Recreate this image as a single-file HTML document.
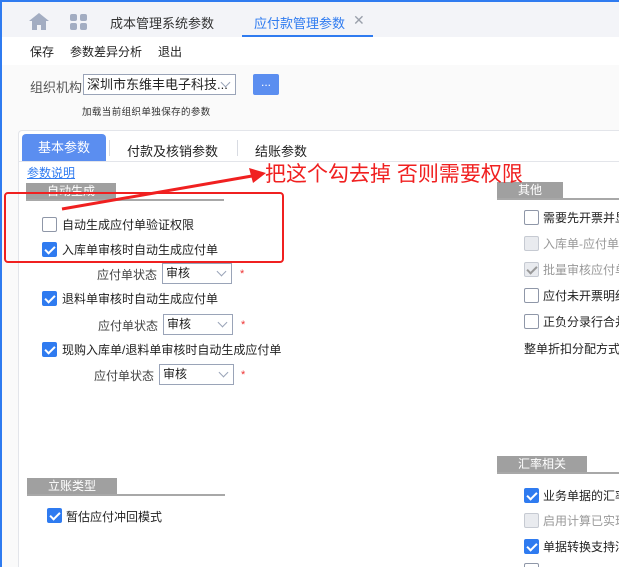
<!DOCTYPE html>
<html style="overflow:hidden;width:619px;height:567px"><head><meta charset="utf-8"><style>
*{margin:0;padding:0;box-sizing:border-box}
body{width:619px;height:567px;overflow:hidden;background:#fff;font-family:"Liberation Sans","Noto Sans CJK SC",sans-serif;font-size:12px;color:#222;position:relative}
.a{position:absolute;white-space:nowrap}
.cb{position:absolute;width:15px;height:15px;border:1px solid #8f97a8;border-radius:2px;background:#fff}
.cb.on{background:#2f7bf0;border-color:#2f7bf0}
.cb.on::after{content:"";position:absolute;left:4px;top:1px;width:4px;height:8px;border:solid #fff;border-width:0 2px 2px 0;transform:rotate(45deg)}
.cb.dis{background:#e9ebef;border-color:#c6cad2}
.cb.disc::after{content:"";position:absolute;left:4px;top:1px;width:4px;height:8px;border:solid #999;border-width:0 2px 2px 0;transform:rotate(45deg)}
.hd{position:absolute;background:#a0a0a0;color:#fff;font-size:12px;height:17px;line-height:17px;text-align:center}
.ln{position:absolute;height:2px;background:#a8a8a8}
.sel{position:absolute;border:1px solid #9aa4b8;background:#fff;height:21px;line-height:19px;padding-left:3px;font-size:12px}
.sel::after{content:"";position:absolute;right:6px;top:4px;width:6px;height:6px;border:solid #9aa4b8;border-width:0 1px 1px 0;transform:rotate(45deg)}
.st{position:absolute;color:#e33;font-size:11px}
.dim{color:#999}
</style></head><body>
<div class="a" style="left:0;top:0;width:619px;height:37px;background:#f3f4f8"></div>
<div class="a" style="left:0;top:0;width:619px;height:2px;background:#2f7bf0"></div>
<div class="a" style="left:0;top:0;width:2px;height:567px;background:#2f7bf0"></div>
<div class="a" style="left:2px;top:65px;width:617px;height:502px;background:#fafafa"></div>
<svg class="a" style="left:29px;top:13px" width="20" height="17" viewBox="0 0 20 17"><path d="M10 0L0 8h3v9h5v-5h4v5h5V8h3z" fill="#a3adc2"/></svg>
<svg class="a" style="left:70px;top:14px" width="17" height="16"><rect x="0" y="0" width="7" height="7" rx="2" fill="#a3adc2"/><rect x="10" y="0" width="7" height="7" rx="2" fill="#a3adc2"/><rect x="0" y="9" width="7" height="7" rx="2" fill="#a3adc2"/><rect x="10" y="9" width="7" height="7" rx="2" fill="#a3adc2"/></svg>
<div class="a" style="left:110px;top:13px;font-size:13px;color:#333">成本管理系统参数</div>
<div class="a" style="left:254px;top:13px;font-size:13px;color:#2f7bf0">应付款管理参数</div>
<div class="a" style="left:353px;top:12px;font-size:14px;color:#9aa0ab">✕</div>
<div class="a" style="left:242px;top:35px;width:131px;height:2px;background:#2f7bf0"></div>
<div class="a" style="left:30px;top:43px">保存</div>
<div class="a" style="left:70px;top:43px">参数差异分析</div>
<div class="a" style="left:158px;top:43px">退出</div>
<div class="a" style="left:30px;top:77px;color:#555;font-size:13px">组织机构</div>
<div class="sel" style="left:83px;top:74px;width:153px;font-size:13px">深圳市东维丰电子科技...</div>
<div class="a" style="left:253px;top:74px;width:26px;height:21px;background:#5b8ef0;border-radius:2px;color:#fff;text-align:center;line-height:16px">...</div>
<div class="a" style="left:82px;top:104px;font-size:9.5px;letter-spacing:0.4px;color:#333">加载当前组织单独保存的参数</div>
<div class="a" style="left:18px;top:130px;width:601px;height:437px;border:1px solid #e3e5ea;border-bottom:none;border-right:none;border-radius:4px 0 0 0;background:#fff"></div>
<div class="a" style="left:19px;top:161px;width:600px;height:1px;background:#e3e5ea"></div>
<div class="a" style="left:22px;top:134px;width:84px;height:27px;background:#5b8ef0;border-radius:4px 4px 0 0;color:#fff;font-size:13px;text-align:center;line-height:27px">基本参数</div>
<div class="a" style="left:109px;top:140px;width:1px;height:16px;background:#d8dbe2"></div>
<div class="a" style="left:127px;top:141px;font-size:13px">付款及核销参数</div>
<div class="a" style="left:237px;top:140px;width:1px;height:16px;background:#d8dbe2"></div>
<div class="a" style="left:255px;top:141px;font-size:13px">结账参数</div>
<div class="a" style="left:27px;top:164px;color:#2f7bf0;text-decoration:underline">参数说明</div>
<div class="hd" style="left:26px;top:183px;width:90px">自动生成</div>
<div class="ln" style="left:26px;top:199px;width:198px"></div>
<div class="cb" style="left:42px;top:217px"></div><div class="a" style="left:62px;top:216px">自动生成应付单验证权限</div>
<div class="cb on" style="left:42px;top:242px"></div><div class="a" style="left:62px;top:241px">入库单审核时自动生成应付单</div>
<div class="a" style="left:97px;top:266px;color:#444">应付单状态</div><div class="sel" style="left:162px;top:263px;width:70px">审核</div><div class="st" style="left:240px;top:268px">*</div>
<div class="cb on" style="left:42px;top:291px"></div><div class="a" style="left:62px;top:290px">退料单审核时自动生成应付单</div>
<div class="a" style="left:98px;top:317px;color:#444">应付单状态</div><div class="sel" style="left:163px;top:314px;width:70px">审核</div><div class="st" style="left:241px;top:319px">*</div>
<div class="cb on" style="left:42px;top:342px"></div><div class="a" style="left:62px;top:341px">现购入库单/退料单审核时自动生成应付单</div>
<div class="a" style="left:94px;top:367px;color:#444">应付单状态</div><div class="sel" style="left:159px;top:364px;width:75px">审核</div><div class="st" style="left:241px;top:369px">*</div>
<div class="hd" style="left:27px;top:478px;width:90px">立账类型</div>
<div class="ln" style="left:27px;top:494px;width:198px"></div>
<div class="cb on" style="left:47px;top:508px"></div><div class="a" style="left:66px;top:508px">暂估应付冲回模式</div>
<div class="hd" style="left:497px;top:182px;width:66px">其他</div>
<div class="ln" style="left:497px;top:198px;width:122px"></div>
<div class="cb" style="left:524px;top:210px"></div><div class="a" style="left:543px;top:209px">需要先开票并显示</div>
<div class="cb dis" style="left:524px;top:236px"></div><div class="a dim" style="left:543px;top:235px">入库单-应付单</div>
<div class="cb dis disc" style="left:524px;top:262px"></div><div class="a dim" style="left:543px;top:261px">批量审核应付单</div>
<div class="cb" style="left:524px;top:288px"></div><div class="a" style="left:543px;top:287px">应付未开票明细</div>
<div class="cb" style="left:524px;top:314px"></div><div class="a" style="left:543px;top:313px">正负分录行合并</div>
<div class="a" style="left:524px;top:340px">整单折扣分配方式</div>
<div class="hd" style="left:497px;top:456px;width:90px">汇率相关</div>
<div class="ln" style="left:497px;top:472px;width:122px"></div>
<div class="cb on" style="left:524px;top:488px"></div><div class="a" style="left:543px;top:487px">业务单据的汇率</div>
<div class="cb dis" style="left:524px;top:513px"></div><div class="a dim" style="left:543px;top:512px">启用计算已实现</div>
<div class="cb on" style="left:524px;top:539px"></div><div class="a" style="left:543px;top:538px">单据转换支持汇率</div>
<div class="cb" style="left:524px;top:563px"></div>
<svg class="a" style="left:0;top:0" width="619" height="567">
<rect x="5" y="193" width="278" height="69" rx="3" fill="none" stroke="#f02020" stroke-width="2"/>
<line x1="62" y1="209" x2="252" y2="176" stroke="#f02020" stroke-width="3"/>
<polygon points="266,173 249,168 253,183" fill="#f02020"/>
</svg>
<div class="a" style="left:265px;top:158px;font-size:21px;color:#f02020">把这个勾去掉 否则需要权限</div>
</body></html>
